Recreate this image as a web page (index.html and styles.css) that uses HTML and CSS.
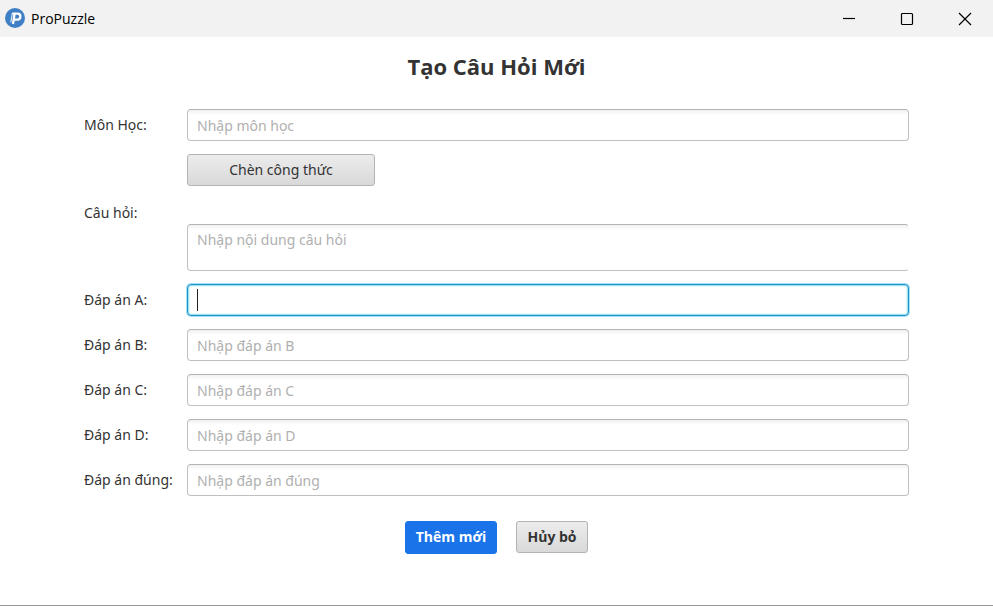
FILE: index.html
```html
<!DOCTYPE html>
<html lang="vi">
<head>
<meta charset="utf-8">
<meta name="viewport" content="width=device-width, initial-scale=1">
<title>ProPuzzle</title>
<link rel="stylesheet" href="styles.css">
</head>
<body>
<div class="window">
  <header class="titlebar">
    <svg class="logo" viewBox="0 0 20 21" aria-hidden="true">
      <circle cx="10" cy="10" r="10" fill="#3f7fc6"/>
      <path d="M7.4 5.6h5.2a2.6 2.8 0 0 1 0 6H9.2M9.6 5.6L8 16" fill="none" stroke="#fff" stroke-width="2.3"/>
      <path d="M7.4 4.8L5.8 14.4" fill="none" stroke="#d5e4f5" stroke-width="1.2"/>
    </svg>
    <span class="app-name">ProPuzzle</span>
    <div class="window-controls">
      <button type="button" class="window-button" aria-label="Thu nhỏ">
        <svg viewBox="0 0 14 14"><path d="M1 6.5h12"/></svg>
      </button>
      <button type="button" class="window-button" aria-label="Phóng to">
        <svg viewBox="0 0 14 14"><rect x="1.5" y="1.5" width="11" height="11" rx="1"/></svg>
      </button>
      <button type="button" class="window-button" aria-label="Đóng">
        <svg viewBox="0 0 14 14"><path d="M1 1l12 12M13 1L1 13"/></svg>
      </button>
    </div>
  </header>
  <main class="content">
    <h1 class="title">Tạo Câu Hỏi Mới</h1>
    <form class="form">
      <div class="fields">
        <label for="subject">Môn Học:</label>
        <input class="field" id="subject" type="text" placeholder="Nhập môn học">

        <label for="question">Câu hỏi:</label>
        <div class="question">
          <button type="button" class="button formula">Chèn công thức</button>
          <textarea class="field question-text" id="question" placeholder="Nhập nội dung câu hỏi"></textarea>
        </div>

        <label for="answer-a">Đáp án A:</label>
        <div class="focus-wrap">
          <input class="field focused" id="answer-a" type="text">
          <span class="caret"></span>
        </div>

        <label for="answer-b">Đáp án B:</label>
        <input class="field" id="answer-b" type="text" placeholder="Nhập đáp án B">

        <label for="answer-c">Đáp án C:</label>
        <input class="field" id="answer-c" type="text" placeholder="Nhập đáp án C">

        <label for="answer-d">Đáp án D:</label>
        <input class="field" id="answer-d" type="text" placeholder="Nhập đáp án D">

        <label for="correct">Đáp án đúng:</label>
        <input class="field" id="correct" type="text" placeholder="Nhập đáp án đúng">
      </div>
      <div class="actions">
        <button type="submit" class="button primary">Thêm mới</button>
        <button type="button" class="button cancel">Hủy bỏ</button>
      </div>
    </form>
  </main>
</div>
</body>
</html>
```
FILE: styles.css
```css
* {
  box-sizing: border-box;
}

body {
  margin: 0;
  background: #fff;
  color: #333;
  font: 14px/20px "Noto Sans", "Open Sans", sans-serif;
}

.window {
  display: flex;
  flex-direction: column;
  min-height: 100vh;
  border-bottom: 1px solid #969696;
}

.titlebar {
  display: flex;
  align-items: center;
  height: 37px;
  padding-left: 5px;
  background: #f2f2f2;
}

.logo {
  width: 20px;
  height: 21px;
}

.app-name {
  margin-left: 6px;
  color: #000;
  font-family: "Open Sans", sans-serif;
}

.window-controls {
  display: flex;
  height: 100%;
  margin-left: auto;
}

.window-button {
  display: flex;
  align-items: center;
  justify-content: center;
  width: 58px;
  padding: 0 0 0 2px;
  border: 0;
  background: none;
}

.window-button svg {
  width: 14px;
  height: 14px;
  fill: none;
  stroke: #000;
  stroke-width: 1.2;
}

.content {
  padding: 13px 84px 50px;
}

.title {
  margin: 0 0 27px;
  font-family: "Open Sans", sans-serif;
  font-size: 22px;
  line-height: 32px;
  text-align: center;
}

.fields {
  display: grid;
  grid-template-columns: 93px 1fr;
  column-gap: 10px;
  row-gap: 13px;
  align-items: center;
}

.field {
  display: block;
  width: 100%;
  height: 32px;
  padding: 0 9px;
  border: 1px solid #c0c0c0;
  border-top-color: #b4b4b4;
  border-radius: 4px;
  outline: 0;
  background: linear-gradient(#f0f0f0, #fff 5px);
  color: #333;
  font: inherit;
}

.field::placeholder {
  color: #b0b0b0;
  opacity: 1;
}

.button {
  height: 32px;
  padding: 0 9px;
  border: 1px solid #b3b3b3;
  border-radius: 3px;
  background: linear-gradient(#ececec, #d9d9d9);
  color: #333;
  font: inherit;
}

.question {
  display: flex;
  flex-direction: column;
  align-items: flex-start;
  gap: 38px;
}

.formula {
  width: 188px;
}

.question-text {
  height: 47px;
  padding-top: 5px;
  border-right-color: transparent;
  resize: none;
}

.focus-wrap {
  position: relative;
}

.focused {
  border-color: #1a93c0;
  background: #fff;
  box-shadow: 0 0 0 1px #a5e2f7, inset 0 0 0 1px #a5e2f7, inset 0 0 0 2px #dff6fd;
  caret-color: transparent;
}

.caret {
  position: absolute;
  top: 5px;
  left: 10px;
  width: 1px;
  height: 22px;
  background: #222;
}

.actions {
  display: flex;
  justify-content: center;
  align-items: flex-start;
  gap: 19px;
  margin-top: 25px;
  font-family: "Open Sans", sans-serif;
  font-weight: 700;
}

.primary {
  width: 92px;
  height: 33px;
  padding-bottom: 2px;
  border-color: #1a73e8;
  background: #1a73e8;
  color: #fff;
}

.cancel {
  width: 72px;
}
```
